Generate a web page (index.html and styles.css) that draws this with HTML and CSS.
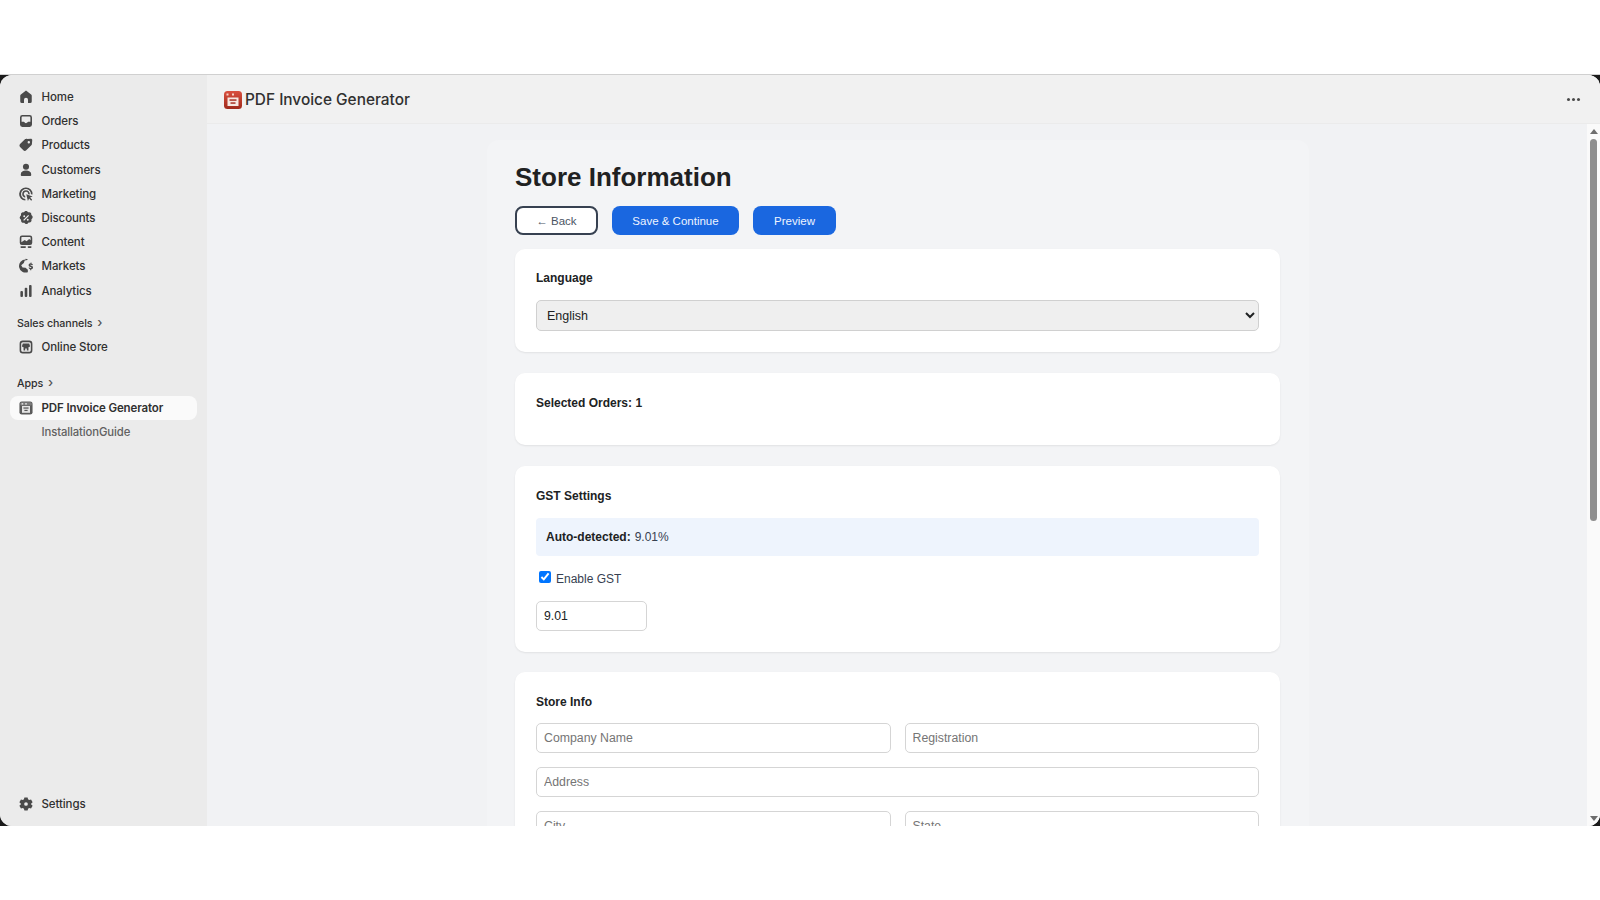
FILE: index.html
```html
<!DOCTYPE html>
<html lang="en">
<head>
    <meta charset="UTF-8">
    <title>PDF Invoice Generator</title>
    <link rel="stylesheet" href="styles.css">
</head>
<body>
    <div class="window">
        <div class="shell">
            <nav class="sidebar">
                <ul class="nav-list">
                    <li class="nav-item"><svg viewBox="0 0 20 20"><path d="M10 2 3.600 6.800A2 2 0 0 0 2.800 8.400V15.500A2 2 0 0 0 4.800 17.500H7.500V13.500a2.500 2.500 0 0 1 5 0v4h2.700a2 2 0 0 0 2-2V8.400a2 2 0 0 0-.8-1.600z"/></svg>Home</li>
                    <li class="nav-item"><svg viewBox="0 0 20 20"><path fill-rule="evenodd" d="M5.500 2.500a3 3 0 0 0-3 3v9a3 3 0 0 0 3 3h9a3 3 0 0 0 3-3v-9a3 3 0 0 0-3-3zM4.500 5.500c0-.6.400-1 1-1h9c.6 0 1 .4 1 1v5.500h-2.700c-.6 0-1 .4-1.200 1-.2.500-.6.800-1.600.8s-1.400-.3-1.600-.8c-.2-.6-.6-1-1.200-1H4.500z"/></svg>Orders</li>
                    <li class="nav-item"><svg viewBox="0 0 20 20"><path fill-rule="evenodd" d="M11.300 2.600 16 2.200c1.100 0 1.800.7 1.800 1.800l-.4 4.700c0 .6-.3 1.100-.7 1.500l-6.400 6.400c-1 1-2.600 1-3.600 0l-4.100-4.100c-1-1-1-2.600 0-3.600l6.400-6.400c.6-.4 2.100-.4 2.300-.4zM13.500 8a1.500 1.500 0 1 0 0-3 1.500 1.500 0 0 0 0 3z"/></svg>Products</li>
                    <li class="nav-item"><svg viewBox="0 0 20 20"><circle cx="10" cy="6" r="3.800"/><path d="M3.500 15.200c0-3.200 2.800-4.700 6.500-4.700s6.500 1.500 6.500 4.700v1c0 .7-.6 1.300-1.300 1.300H4.800c-.7 0-1.300-.6-1.300-1.300z"/></svg>Customers</li>
                    <li class="nav-item"><svg viewBox="0 0 20 20"><path d="M10 1.800a8.200 8.200 0 0 0-.8 16.400v-2a6.200 6.200 0 1 1 7-6l2 .4A8.200 8.200 0 0 0 10 1.800z"/><path d="M10 5.300a4.700 4.700 0 0 0-1 9.300v-2a2.800 2.800 0 1 1 3.800-2.300l1.900.4A4.700 4.700 0 0 0 10 5.300z"/><path d="m10.300 10.300 8 2.700-3.200 1.500 2.600 2.600-1.200 1.200-2.600-2.600-1.500 3.200z"/></svg>Marketing</li>
                    <li class="nav-item"><svg viewBox="0 0 20 20"><path fill-rule="evenodd" d="M8.300 1.900c.9-.7 2.500-.7 3.400 0l1.100.9 1.400-.1c1.200 0 2.300 1 2.400 2.200l.1 1.400 1 1c.9 1 .9 2.400 0 3.400l-.9 1 .1 1.400c0 1.300-1 2.400-2.300 2.500l-1.400.1-1 1.100c-1 .9-2.500.9-3.400 0l-1-1-1.400.1c-1.300 0-2.400-1-2.500-2.300l-.1-1.400-1-1.100c-.9-1-.9-2.400 0-3.400l1-1-.1-1.400c0-1.200 1-2.300 2.300-2.400l1.400-.1zM7.800 9a1.200 1.200 0 1 0 0-2.400 1.200 1.200 0 0 0 0 2.400zm4.400 4.400a1.200 1.200 0 1 0 0-2.400 1.200 1.200 0 0 0 0 2.400zM12.700 6.200 6.500 12.400l1.100 1.100 6.200-6.200z"/></svg>Discounts</li>
                    <li class="nav-item"><svg viewBox="0 0 20 20"><path fill-rule="evenodd" d="M5 1.800A2.800 2.800 0 0 0 2.200 4.600v6.200A2.800 2.800 0 0 0 5 13.600h10a2.800 2.800 0 0 0 2.800-2.800V4.600A2.800 2.800 0 0 0 15 1.800zM4.200 4.600c0-.5.300-.8.800-.8h10c.5 0 .8.300.8.800v3.200l-1.800-1.500-3.300 2.900-2.300-1.600-4.200 2.700z"/><rect x="3" y="15.400" width="7" height="2" rx="1"/><rect x="12" y="15.400" width="5" height="2" rx="1"/></svg>Content</li>
                    <li class="nav-item"><svg viewBox="0 0 20 20"><path d="M9.500 1.800a8.200 8.200 0 1 0 2.800 15.900v-2.900l-2.800-2.500-3.800-.4-1.700-2.700 3.300-2.800 1.100-3.300 3.400-.5.300-1a8.200 8.200 0 0 0-2.600-.7z"/><path d="M15.800 5.500v1.200c-1.400.1-2.500 1-2.500 2.300 0 1.300 1 1.900 2.300 2.200 1 .3 1.200.5 1.200.8 0 .4-.4.600-1 .6-.7 0-1.100-.3-1.200-.8l-1.400.2c.1 1 .9 1.800 2 2v1.200h1.400v-1.200c1.300-.2 2.200-1 2.200-2.200 0-1.300-1-1.900-2.400-2.200-.9-.2-1.100-.4-1.100-.7 0-.4.300-.6.900-.6s1 .3 1.100.7l1.400-.2c-.2-1-.9-1.600-1.900-1.800V5.500z"/></svg>Markets</li>
                    <li class="nav-item"><svg viewBox="0 0 20 20"><rect x="3" y="10" width="3.200" height="7.500" rx="1.200"/><rect x="8.400" y="6" width="3.200" height="11.500" rx="1.200"/><rect x="13.800" y="2.500" width="3.200" height="15" rx="1.200"/></svg>Analytics</li>
                </ul>
                <div class="nav-heading">Sales channels <span class="caret">›</span></div>
                <ul class="nav-list">
                    <li class="nav-item"><svg viewBox="0 0 20 20"><path fill-rule="evenodd" d="M6 2A4 4 0 0 0 2 6v8a4 4 0 0 0 4 4h8a4 4 0 0 0 4-4V6a4 4 0 0 0-4-4zM4 6c0-1.100.9-2 2-2h8c1.100 0 2 .9 2 2v8c0 1.100-.9 2-2 2H6c-1.100 0-2-.9-2-2z"/><path d="M6 5.500h8l1 3.300c0 1.200-1.200 1.700-1.900 1.300V14.500h-2.100v-2.700H9v2.700H6.900v-4.400C6.200 10.500 5 10 5 8.800z"/></svg>Online Store</li>
                </ul>
                <div class="nav-heading apps-heading">Apps <span class="caret">›</span></div>
                <ul class="nav-list">
                    <li class="nav-item nav-item-active"><svg class="app-icon" viewBox="0 0 20 20"><rect x="1.800" y="1.800" width="16.400" height="16.400" rx="3" fill="#5a5a5a"/><rect x="2.800" y="2.800" width="14.400" height="4" rx="1.500" fill="#7d7d7d"/><rect x="5" y="7.500" width="10" height="8.500" fill="#e4e4e4"/><rect x="6.800" y="9.300" width="6.400" height="1.500" fill="#555"/><rect x="8" y="12.300" width="4" height="1.500" fill="#555"/><rect x="4.500" y="3.800" width="2" height="2" fill="#ddd"/><rect x="9" y="3.800" width="2" height="2" fill="#ddd"/></svg>PDF Invoice Generator</li>
                    <li class="nav-item nav-sub">InstallationGuide</li>
                </ul>
                <div class="sidebar-foot">
                    <div class="nav-item"><svg viewBox="0 0 20 20"><path fill-rule="evenodd" d="M8 1.800h4l.6 2.400 1.300.8 2.400-.7 2 3.400-1.800 1.700v1.200l1.800 1.700-2 3.400-2.400-.7-1.300.8-.6 2.400H8l-.6-2.400-1.300-.8-2.400.7-2-3.400 1.800-1.700V9.400L1.700 7.700l2-3.400 2.400.7 1.300-.8zM10 12.300a2.300 2.300 0 1 0 0-4.600 2.300 2.300 0 0 0 0 4.600z"/></svg>Settings</div>
                </div>
            </nav>

            <div class="main">
                <header class="topbar">
                    <div class="app-title">
                        <svg class="logo" viewBox="0 0 18 18">
                            <defs><linearGradient id="logo-red" x1="0" y1="0" x2="0" y2="1"><stop offset="0" stop-color="#d9503f"/><stop offset="1" stop-color="#a02a1c"/></linearGradient></defs>
                            <rect width="18" height="18" rx="3.500" fill="url(#logo-red)"/>
                            <rect x="3.500" y="6.500" width="11" height="8.500" fill="#f6e8e2"/>
                            <rect x="5.500" y="8.300" width="7" height="1.500" fill="#a83225"/>
                            <rect x="6.500" y="11.300" width="5" height="1.500" fill="#a83225"/>
                            <rect x="2.500" y="2.500" width="2" height="2" fill="#f7d3c8"/>
                            <rect x="8" y="2.500" width="2" height="2" fill="#f7d3c8"/>
                        </svg>
                        <span>PDF Invoice Generator</span>
                    </div>
                    <div class="more-dots"><i></i><i></i><i></i></div>
                </header>
                <div class="frame">
                    <div class="frame-body">
                        <div class="page">
                            <h1>Store Information</h1>
                            <div class="actions">
                                <button class="btn btn-back">← Back</button>
                                <button class="btn btn-blue btn-save">Save &amp; Continue</button>
                                <button class="btn btn-blue btn-preview">Preview</button>
                            </div>

                            <section class="card card-language">
                                <h3>Language</h3>
                                <select class="lang-select"><option>English</option></select>
                            </section>

                            <section class="card card-orders">
                                <h3>Selected Orders: 1</h3>
                            </section>

                            <section class="card card-gst">
                                <h3>GST Settings</h3>
                                <div class="notice"><b>Auto-detected:</b> 9.01%</div>
                                <label class="check-row"><input type="checkbox" checked>Enable GST</label>
                                <input class="field field-gst" type="text" value="9.01">
                            </section>

                            <section class="card card-store">
                                <h3>Store Info</h3>
                                <div class="field-grid">
                                    <input class="field" type="text" placeholder="Company Name">
                                    <input class="field" type="text" placeholder="Registration">
                                    <input class="field field-wide" type="text" placeholder="Address">
                                    <input class="field" type="text" placeholder="City">
                                    <input class="field" type="text" placeholder="State">
                                </div>
                            </section>
                        </div>
                    </div>
                    <div class="scrollbar">
                        <div class="arrow arrow-up"></div>
                        <div class="track"><div class="thumb"></div></div>
                        <div class="arrow arrow-down"></div>
                    </div>
                </div>
            </div>
        </div>
    </div>
</body>
</html>
```

FILE: styles.css
```css
* {
    box-sizing: border-box;
}

html, body {
    margin: 0;
    height: 100%;
    background: #fff;
    overflow: hidden;
}

body {
    padding-top: 74px;
    font-family: 'Liberation Sans', Arial, sans-serif;
    color: #202223;
}

.window {
    height: 752px;
    background: #1a1a1a;
    border-top: 1px solid #d0d0d0;
}

.shell {
    display: flex;
    height: 100%;
    border-radius: 12px;
    overflow: hidden;
    background: #ebebeb;
}

/* sidebar */
.sidebar {
    width: 207px;
    flex: none;
    display: flex;
    flex-direction: column;
    padding: 10px 10px 0;
    background: #ebebeb;
    font-family: Inter, sans-serif;
    font-size: 11.5px;
    letter-spacing: -0.1px;
    font-weight: 550;
    color: #303030;
}

.nav-list {
    list-style: none;
    margin: 0;
    padding: 0;
}

.nav-item {
    display: flex;
    align-items: center;
    gap: 7.5px;
    height: 24.2px;
    padding-left: 8px;
    border-radius: 8px;
}

.nav-item svg {
    width: 16px;
    height: 16px;
    flex: none;
    fill: #4a4a4a;
}

.nav-item-active {
    background: #fafafa;
    color: #303030;
    font-weight: 600;
    letter-spacing: -0.12px;
}

.nav-sub {
    padding-left: 31.5px;
    font-size: 11.3px;
    color: #616161;
    font-weight: 500;
}

.nav-heading {
    padding: 14px 0 0 7px;
    height: 31.5px;
    font-size: 10.7px;
    font-weight: 500;
    color: #303030;
}

.nav-heading + .nav-list {
    margin-top: 1px;
}

.apps-heading {
    padding-top: 17.5px;
    height: 35.5px;
}

.caret {
    margin-left: 2px;
    font-size: 13px;
    line-height: 10px;
    color: #555;
}

.sidebar-foot {
    margin-top: auto;
    padding-bottom: 10px;
}

/* main column */
.main {
    flex: 1;
    min-width: 0;
    display: flex;
    flex-direction: column;
    background: #f1f2f4;
}

.topbar {
    height: 49px;
    flex: none;
    display: flex;
    align-items: center;
    justify-content: space-between;
    padding: 0 20px 0 17px;
    background: #f1f1f1;
    border-bottom: 1px solid #ebebeb;
}

.app-title {
    display: flex;
    align-items: center;
    gap: 3px;
    font-family: Inter, sans-serif;
    font-size: 15.4px;
    font-weight: 550;
    color: #303030;
}

.logo {
    width: 18px;
    height: 18px;
    margin-top: 1px;
}

.more-dots {
    display: flex;
    gap: 2px;
}

.more-dots i {
    width: 3px;
    height: 3px;
    border-radius: 50%;
    background: #4a4a4a;
}

.frame {
    flex: 1;
    min-height: 0;
    display: flex;
}

.frame-body {
    flex: 1;
    min-width: 0;
    overflow: hidden;
    padding-left: 2px;
    background: #f1f2f4;
}

.page {
    width: 822px;
    margin: 16px auto 0;
    padding: 21px 29px 28px 28px;
    background: #f3f4f6;
    border-radius: 12px;
}

h1 {
    margin: 0 0 13px;
    font-size: 26px;
    line-height: 32px;
    font-weight: 700;
    color: #1f2122;
}

.actions {
    display: flex;
    gap: 14px;
    margin-bottom: 14px;
}

.btn {
    height: 29px;
    border-radius: 8px;
    font-family: 'Liberation Sans', Arial, sans-serif;
    font-size: 11.5px;
    padding: 0;
    border: 0;
}

.btn-back {
    width: 83px;
    background: #fff;
    border: 2px solid #374151;
    color: #4b5563;
}

.btn-blue {
    background: #1a67e0;
    color: #eef4ff;
}

.btn-save {
    width: 127px;
}

.btn-preview {
    width: 83px;
}

.card {
    margin-bottom: 20px;
    padding: 22px 21px 21px;
    background: #fff;
    border-radius: 10px;
    box-shadow: 0 1px 2px rgba(0, 0, 0, 0.08);
}

.card h3 {
    margin: 0;
    font-size: 12px;
    line-height: 16px;
    font-weight: 700;
    color: #202223;
}

.card-language {
    margin-bottom: 21px;
    padding-top: 21px;
}

.card-language h3 {
    margin-bottom: 14px;
}

.lang-select {
    display: block;
    width: 100%;
    height: 31px;
    padding: 0 6px;
    border: 1px solid #d0d0d0;
    border-radius: 5px;
    background: #efefef;
    font-family: 'Liberation Sans', Arial, sans-serif;
    font-size: 12.5px;
    color: #202223;
}

.card-orders {
    height: 72px;
    margin-bottom: 21px;
    padding-top: 21.5px;
}

.card-gst h3 {
    margin-bottom: 14px;
}

.notice {
    height: 38px;
    padding: 0 10px;
    display: flex;
    align-items: center;
    gap: 4px;
    background: #eef4fd;
    border-radius: 4px;
    font-size: 12px;
    color: #374151;
}

.notice b {
    color: #202223;
}

.check-row {
    display: flex;
    align-items: center;
    margin: 13px 0 14px;
    height: 18px;
    padding-top: 2px;
    font-size: 12px;
    color: #374151;
}

.check-row input {
    width: 12px;
    height: 12px;
    margin: 0 5px 0 3px;
    position: relative;
    top: -2px;
}

.field {
    display: block;
    width: 100%;
    height: 30px;
    padding: 0 7px;
    border: 1px solid #d5d5d5;
    border-radius: 5px;
    background: #fff;
    font-family: 'Liberation Sans', Arial, sans-serif;
    font-size: 12.3px;
    color: #202223;
}

.field::placeholder {
    color: #757575;
}

.field-gst {
    width: 111px;
}

.card .field-grid {
    margin-top: 13px;
}

.field-grid {
    display: grid;
    grid-template-columns: 1fr 1fr;
    gap: 14px;
}

.field-wide {
    grid-column: 1 / -1;
}

/* drawn scrollbar, the frame in the shot has a classic one */
.scrollbar {
    width: 13px;
    flex: none;
    display: flex;
    flex-direction: column;
    align-items: center;
    background: #fafafa;
}

.track {
    flex: 1;
    width: 100%;
    padding: 2px 3px 0;
}

.thumb {
    height: 382px;
    background: #8e8e8e;
    border-radius: 4px;
}

.arrow {
    flex: none;
    width: 0;
    border-left: 4.5px solid transparent;
    border-right: 4.5px solid transparent;
}

.arrow-up {
    height: 0;
    margin: 5px 0 3px;
    border-bottom: 5px solid #6e6e6e;
}

.arrow-down {
    height: 0;
    margin: 3px 0 5px;
    border-top: 5px solid #6e6e6e;
}
```
